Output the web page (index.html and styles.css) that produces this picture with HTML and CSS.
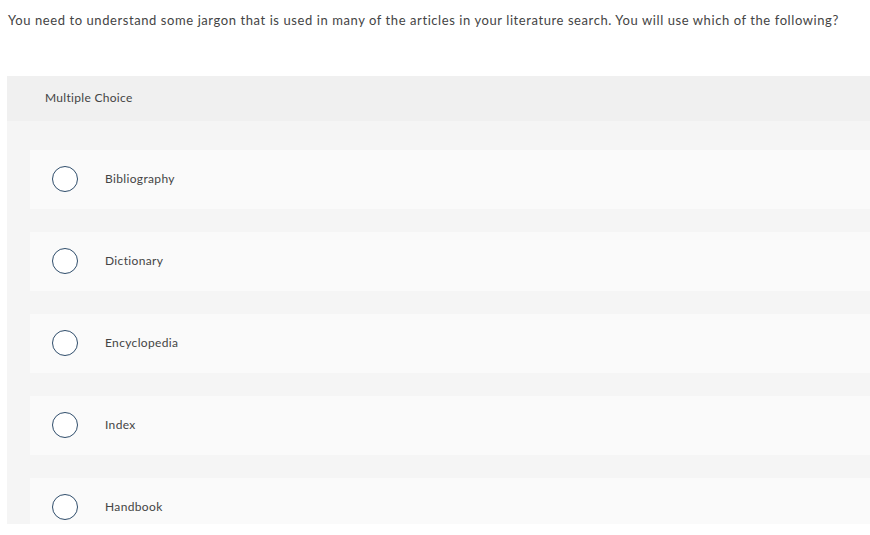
FILE: index.html
```html
<!DOCTYPE html>
<html lang="en">

<head>
    <meta charset="UTF-8">
    <meta name="viewport" content="width=device-width, initial-scale=1.0">
    <title>Question</title>
    <link rel="stylesheet" href="styles.css">
</head>

<body>
    <p class="prompt">You need to understand some jargon that is used in many of the articles in your literature search. You will use which of the following?</p>
    <div class="panel">
        <div class="panel-head">Multiple Choice</div>
        <div class="choices">
            <label class="choice"><span class="radio"></span><span class="label">Bibliography</span></label>
            <label class="choice"><span class="radio"></span><span class="label">Dictionary</span></label>
            <label class="choice"><span class="radio"></span><span class="label">Encyclopedia</span></label>
            <label class="choice"><span class="radio"></span><span class="label">Index</span></label>
            <label class="choice"><span class="radio"></span><span class="label">Handbook</span></label>
        </div>
    </div>
</body>

</html>
```

FILE: styles.css
```css
html {
    overflow: hidden;
}

body {
    margin: 0;
    padding: 0;
    background: #fff;
    color: #444;
    font-family: Lato, "Liberation Sans", sans-serif;
}

.prompt {
    margin: 0;
    padding: 12px 0 0 8px;
    height: 64px;
    font-size: 13px;
    line-height: 16px;
    letter-spacing: 0.58px;
}

.panel {
    margin-left: 7px;
    height: 448px;
    background: #f5f5f5;
}

.panel-head {
    height: 43px;
    padding: 0 0 2px 38px;
    background: #f0f0f0;
    font-size: 12px;
    line-height: 43px;
    letter-spacing: 0.3px;
}

.choices {
    display: flex;
    flex-direction: column;
    gap: 22px;
    padding: 29px 0 0 23px;
}

.choice {
    display: flex;
    align-items: center;
    height: 59px;
    padding: 0 0 0 22px;
    background: #fafafa;
    font-size: 12px;
    letter-spacing: 0.35px;
}

.choice + .choice {
    margin-top: 1px;
}

.radio {
    width: 24px;
    height: 24px;
    border: 1px solid #2f4d6b;
    border-radius: 50%;
    margin: 0 27px 1px 0;
    background: #fff;
}

.label {
    margin-bottom: 3px;
}
```
